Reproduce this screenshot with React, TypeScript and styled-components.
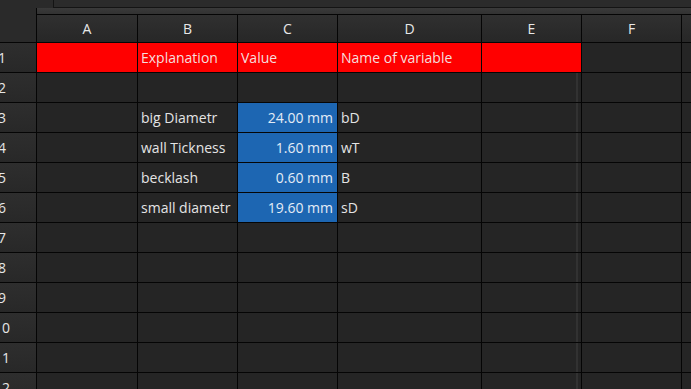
import React from "react";
import styled, { createGlobalStyle, css } from "styled-components";

const Global = createGlobalStyle`
  html, body { margin: 0; padding: 0; background: #2a2a2a; overflow: hidden; }
  body { font-family: "Open Sans", "Noto Sans", sans-serif; }
`;

const Page = styled.div`
  width: 691px;
  height: 389px;
  display: flex;
  flex-direction: column;
  background: #2a2a2a;
  overflow: hidden;
`;

const TopBar = styled.div`
  display: flex;
  height: 8px;
  flex: none;
`;

const TopSpacer = styled.div`
  width: 53px;
  flex: none;
`;

const InputBox = styled.div`
  flex: 1;
  background: #2b2b2b;
  border-left: 1px solid #141414;
  border-bottom: 1px solid #141414;
`;

const Sheet = styled.div`
  display: grid;
  grid-template-columns: 36px 100px 99px 99px 143px 99px 99px 1fr;
  grid-template-rows: 6px 27px repeat(12, 29px);
  gap: 1px;
  background: #050505;
  flex: none;
`;

const Corner = styled.div`
  grid-column: 1;
  grid-row: 1 / 3;
  background: #2a2a2a;
`;

const Band = styled.div`
  grid-column: 2 / -1;
  grid-row: 1;
  background: linear-gradient(#3a3a3a, #323232);
`;

const ColHeader = styled.div`
  background: linear-gradient(#303030, #272727);
  color: #e8e8e8;
  font-size: 14px;
  display: flex;
  align-items: center;
  justify-content: center;
`;

const RowHeader = styled.div`
  background: linear-gradient(#2e2e2e, #282828);
  color: #e6e6e6;
  font-size: 14px;
  overflow: hidden;
  display: flex;
  align-items: center;
`;

const RowLabel = styled.span`
  flex: none;
  width: 80px;
  margin-left: -38px;
  text-align: center;
`;

type Tone = "plain" | "red" | "blue";

const Cell = styled.div<{ $tone: Tone; $right?: boolean; $mark?: boolean }>`
  background: #252525;
  color: #e4e4e4;
  font-size: 14px;
  display: flex;
  align-items: center;
  justify-content: ${(p) => (p.$right ? "flex-end" : "flex-start")};
  padding: 0 4px 0 3px;
  overflow: hidden;
  white-space: nowrap;
  ${(p) =>
    p.$mark &&
    css`
      background-image: linear-gradient(
        to right,
        transparent 94px,
        #323232 94px,
        #323232 96px,
        transparent 96px
      );
    `}
  ${(p) =>
    p.$tone === "red" &&
    css`
      background: #ff0000;
      color: #f6dede;
    `}
  ${(p) =>
    p.$tone === "blue" &&
    css`
      background: #1d66b2;
      color: #e3ecf6;
    `}
`;

const columns = ["A", "B", "C", "D", "E", "F", ""];

type Row = { B?: string; C?: string; D?: string; red?: boolean; blue?: boolean };

const rows: Row[] = [
  { B: "Explanation", C: "Value", D: "Name of variable", red: true },
  {},
  { B: "big Diametr", C: "24.00 mm", D: "bD", blue: true },
  { B: "wall Tickness", C: "1.60 mm", D: "wT", blue: true },
  { B: "becklash", C: "0.60 mm", D: "B", blue: true },
  { B: "small diametr", C: "19.60 mm", D: "sD", blue: true },
  {},
  {},
  {},
  {},
  {},
  {},
];

export default function App() {
  return (
    <Page>
      <Global />
      <TopBar>
        <TopSpacer />
        <InputBox />
      </TopBar>
      <Sheet>
        <Corner />
        <Band />
        {columns.map((c, i) => (
          <ColHeader key={"h" + i}>{c}</ColHeader>
        ))}
        {rows.map((r, i) => {
          const redTone: Tone = r.red ? "red" : "plain";
          return (
            <React.Fragment key={i}>
              <RowHeader>
                <RowLabel>{i + 1}</RowLabel>
              </RowHeader>
              <Cell $tone={redTone} />
              <Cell $tone={redTone}>{r.B}</Cell>
              <Cell $tone={r.red ? "red" : r.blue ? "blue" : "plain"} $right={!r.red}>
                {r.C}
              </Cell>
              <Cell $tone={redTone}>{r.D}</Cell>
              <Cell $tone={redTone} $mark={!r.red} />
              <Cell $tone="plain" />
              <Cell $tone="plain" />
            </React.Fragment>
          );
        })}
      </Sheet>
    </Page>
  );
}
